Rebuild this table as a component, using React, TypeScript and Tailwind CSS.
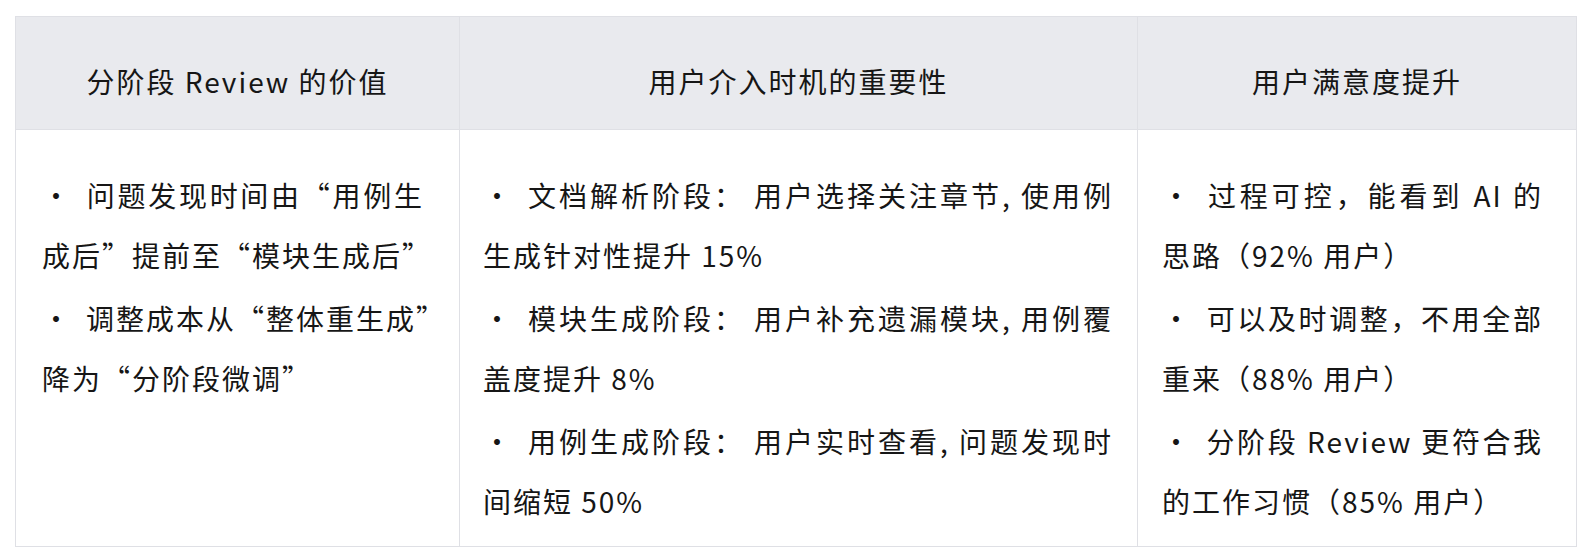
import React from "react";

type Col = { title: string; pad: string; items: string[][] };

// each item is split into the visual lines of the reference
const columns: Col[] = [
  {
    title: "分阶段 Review 的价值",
    pad: "pl-[26px] pr-[35px]",
    items: [
      ["问题发现时间由“用例生", "成后”提前至“模块生成后”"],
      ["调整成本从“整体重生成”", "降为“分阶段微调”"],
    ],
  },
  {
    title: "用户介入时机的重要性",
    pad: "pl-[23px] pr-[24px]",
    items: [
      ["文档解析阶段： 用户选择关注章节, 使用例", "生成针对性提升 15%"],
      ["模块生成阶段： 用户补充遗漏模块, 用例覆", "盖度提升 8%"],
      ["用例生成阶段： 用户实时查看, 问题发现时", "间缩短 50%"],
    ],
  },
  {
    title: "用户满意度提升",
    pad: "pl-[24px] pr-[33px]",
    items: [
      ["过程可控，能看到 AI 的", "思路（92% 用户）"],
      ["可以及时调整，不用全部", "重来（88% 用户）"],
      ["分阶段 Review 更符合我", "的工作习惯（85% 用户）"],
    ],
  },
];

function Item({ lines }: { lines: string[] }) {
  return (
    <p className="leading-[60px]">
      {lines.map((l, k) => (
        <span
          key={k}
          className={`block whitespace-nowrap ${k < lines.length - 1 ? "text-justify [text-align-last:justify]" : ""}`}
        >
          {k === 0 && <span className="inline-block w-[26px] mr-[18px] text-center">·</span>}
          {l}
        </span>
      ))}
    </p>
  );
}

export default function App() {
  return (
    <div className="min-h-screen bg-white pt-[16px] pl-[15px] font-['Noto_Sans_CJK_SC','Liberation_Sans',sans-serif] text-[28px] tracking-[2px] text-[#161616]">
      <div className="w-[1562px] border border-[#dfe0e5] grid grid-cols-[443px_678px_439px]">
        {columns.map((col, i) => (
          <div
            key={"h" + i}
            className={`bg-[#e9eaee] border-b border-[#dfe0e5] pt-[34px] pb-[18px] text-center leading-[60px] whitespace-pre ${i > 0 ? "border-l" : ""}`}
          >
            {col.title}
          </div>
        ))}
        {columns.map((col, i) => (
          <div
            key={"b" + i}
            className={`bg-white border-[#dfe0e5] pt-[35px] pb-[15px] ${col.pad} ${i > 0 ? "border-l" : ""}`}
          >
            <div className="flex flex-col gap-[3px]">
              {col.items.map((lines, j) => (
                <Item key={j} lines={lines} />
              ))}
            </div>
          </div>
        ))}
      </div>
    </div>
  );
}
